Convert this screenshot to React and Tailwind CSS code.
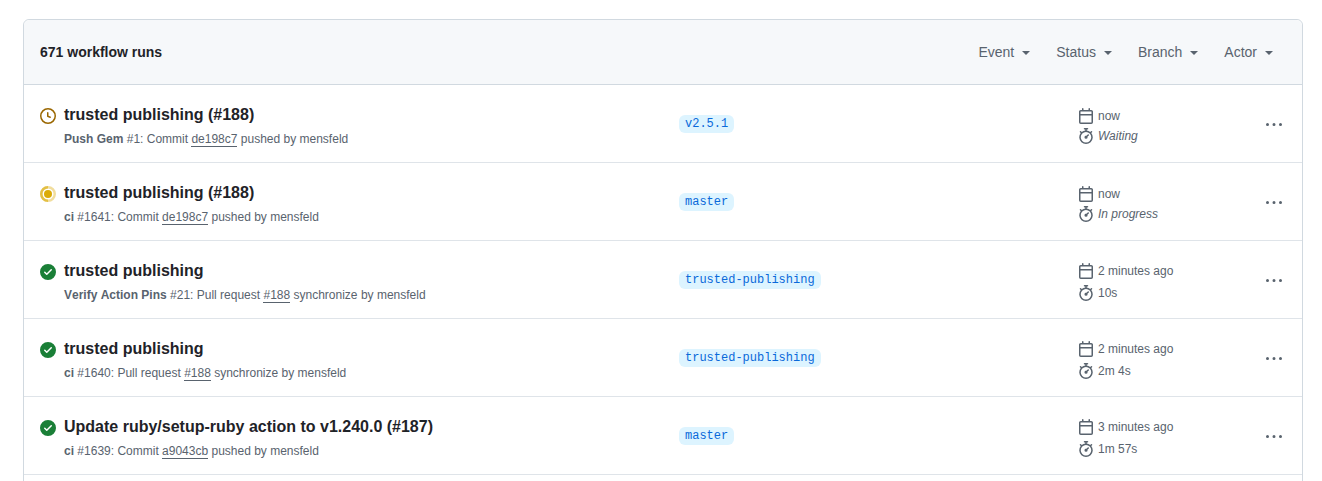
const sans = "font-['Liberation_Sans',Arial,sans-serif]";

function ClockIcon() {
  return (
    <svg width="16" height="16" viewBox="0 0 16 16" fill="#9a6700">
      <path d="M8 0a8 8 0 1 1 0 16A8 8 0 0 1 8 0ZM1.5 8a6.5 6.5 0 1 0 13 0 6.5 6.5 0 0 0-13 0Zm7-3.25v2.992l2.028.812a.75.75 0 0 1-.557 1.392l-2.5-1A.751.751 0 0 1 7 8.25v-3.5a.75.75 0 0 1 1.5 0Z" />
    </svg>
  );
}

function ProgressIcon() {
  return (
    <svg width="16" height="16" viewBox="0 0 16 16">
      <circle cx="8" cy="8" r="6.75" fill="none" stroke="#dbab09" strokeWidth="2.5" opacity="0.4" />
      <path d="M8 14.75A6.75 6.75 0 0 1 8 1.25" fill="none" stroke="#dbab09" strokeWidth="2.5" opacity="0.6" />
      <circle cx="8" cy="8" r="4" fill="#dbab09" />
    </svg>
  );
}

function CheckIcon() {
  return (
    <svg width="16" height="16" viewBox="0 0 16 16" fill="#1a7f37">
      <path d="M8 16A8 8 0 1 1 8 0a8 8 0 0 1 0 16Zm3.78-9.72a.751.751 0 0 0-.018-1.042.751.751 0 0 0-1.042-.018L6.75 9.19 5.28 7.72a.751.751 0 0 0-1.042.018.751.751 0 0 0-.018 1.042l2 2a.75.75 0 0 0 1.06 0Z" />
    </svg>
  );
}

function CalendarIcon() {
  return (
    <svg width="16" height="16" viewBox="0 0 16 16" fill="#59636e" className="shrink-0">
      <path d="M4.75 0a.75.75 0 0 1 .75.75V2h5V.75a.75.75 0 0 1 1.5 0V2h1.25c.966 0 1.75.784 1.75 1.75v10.5A1.75 1.75 0 0 1 13.25 16H2.75A1.75 1.75 0 0 1 1 14.25V3.75C1 2.784 1.784 2 2.75 2H4V.75A.75.75 0 0 1 4.75 0ZM2.5 7.5v6.75c0 .138.112.25.25.25h10.5a.25.25 0 0 0 .25-.25V7.5Zm10.75-4H2.75a.25.25 0 0 0-.25.25V6h11V3.75a.25.25 0 0 0-.25-.25Z" />
    </svg>
  );
}

function StopwatchIcon() {
  return (
    <svg width="16" height="16" viewBox="0 0 16 16" fill="#59636e" className="shrink-0">
      <path d="M5.75.75A.75.75 0 0 1 6.5 0h3a.75.75 0 0 1 0 1.5h-.75v1l-.001.041a6.724 6.724 0 0 1 3.464 1.435l.007-.006.75-.75a.751.751 0 0 1 1.042.018.751.751 0 0 1 .018 1.042l-.75.75-.006.007a6.75 6.75 0 1 1-10.548 0L2.72 5.03l-.75-.75a.751.751 0 0 1 .018-1.042.751.751 0 0 1 1.042-.018l.75.75.007.006A6.72 6.72 0 0 1 7.25 2.541V1.5H6.5a.75.75 0 0 1-.75-.75ZM8 14.5a5.25 5.25 0 1 0-.001-10.501A5.25 5.25 0 0 0 8 14.5Zm.389-6.7 1.33-1.33a.75.75 0 1 1 1.061 1.06L9.45 8.861A1.503 1.503 0 0 1 8 10.75a1.499 1.499 0 1 1 .389-2.95Z" />
    </svg>
  );
}

function KebabIcon() {
  return (
    <svg width="16" height="16" viewBox="0 0 16 16" fill="#59636e">
      <path d="M8 9a1.5 1.5 0 1 0 0-3 1.5 1.5 0 0 0 0 3ZM1.5 9a1.5 1.5 0 1 0 0-3 1.5 1.5 0 0 0 0 3Zm13 0a1.5 1.5 0 1 0 0-3 1.5 1.5 0 0 0 0 3Z" />
    </svg>
  );
}

function Filter({ label }) {
  return (
    <span className="flex items-center text-sm text-[#59636e]">
      {label}
      <span className="ml-[8px] mt-px h-0 w-0 border-x-4 border-t-4 border-x-transparent border-t-[#59636e]" />
    </span>
  );
}

const runs = [
  { icon: <ClockIcon />, title: "trusted publishing (#188)", name: "Push Gem", num: "#1", kind: "Commit", ref: "de198c7", after: "pushed by mensfeld", branch: "v2.5.1", when: "now", took: "Waiting", pending: true },
  { icon: <ProgressIcon />, title: "trusted publishing (#188)", name: "ci", num: "#1641", kind: "Commit", ref: "de198c7", after: "pushed by mensfeld", branch: "master", when: "now", took: "In progress", pending: true },
  { icon: <CheckIcon />, title: "trusted publishing", name: "Verify Action Pins", num: "#21", kind: "Pull request", ref: "#188", after: "synchronize by mensfeld", branch: "trusted-publishing", when: "2 minutes ago", took: "10s" },
  { icon: <CheckIcon />, title: "trusted publishing", name: "ci", num: "#1640", kind: "Pull request", ref: "#188", after: "synchronize by mensfeld", branch: "trusted-publishing", when: "2 minutes ago", took: "2m 4s" },
  { icon: <CheckIcon />, title: "Update ruby/setup-ruby action to v1.240.0 (#187)", name: "ci", num: "#1639", kind: "Commit", ref: "a9043cb", after: "pushed by mensfeld", branch: "master", when: "3 minutes ago", took: "1m 57s" },
];

function RunRow({ run }) {
  return (
    <div className="flex h-[78px] border-b border-[#d1d9e0b3] pl-4">
      <div className="flex w-[639px] shrink-0 pt-[21px]">
        <div className="mr-2 w-4 shrink-0 pt-[2px]">{run.icon}</div>
        <div>
          <div className="text-base leading-[18px] font-bold text-[#1f2328]">{run.title}</div>
          <div className="mt-[6px] text-xs leading-[18px] text-[#59636e]">
            <span className="font-bold [font-kerning:none]">{run.name}</span> {run.num}: {run.kind}{" "}
            <span className="border-b border-[#59636e]">{run.ref}</span> {run.after}
          </div>
        </div>
      </div>
      <div className="w-[399px] shrink-0 pt-[25px]">
        <span className="inline-block rounded-md bg-[#ddf4ff] px-1.5 font-['Liberation_Mono',monospace] text-xs leading-[18px] text-[#0969da]">
          {run.branch}
        </span>
      </div>
      <div className={`flex-1 text-xs leading-[18px] text-[#59636e] ${run.pending ? "pt-[22px]" : "pt-[21px]"}`}>
        <div className="flex items-center gap-1">
          <CalendarIcon />
          <span>{run.when}</span>
        </div>
        <div className={`flex items-center gap-1 ${run.pending ? "mt-[2px]" : "mt-[4px]"}`}>
          <StopwatchIcon />
          <span className={run.pending ? "italic" : ""}>{run.took}</span>
        </div>
      </div>
      <div className="mr-5 pt-[32px]">
        <KebabIcon />
      </div>
    </div>
  );
}

export default function App() {
  return (
    <div className={`h-[481px] overflow-hidden bg-white pt-[19px] pr-[19px] pl-[23px] ${sans}`}>
      <div className="h-[600px] rounded-md border border-[#d1d9e0]">
        <div className="flex h-[65px] items-center justify-between rounded-t-md border-b border-[#d1d9e0] bg-[#f6f8fa] pr-[29px] pl-4">
          <div className="text-sm font-bold text-[#1f2328]">671 workflow runs</div>
          <div className="flex gap-[26px]">
            <Filter label="Event" />
            <Filter label="Status" />
            <Filter label="Branch" />
            <Filter label="Actor" />
          </div>
        </div>
        {runs.map((run, i) => (
          <RunRow key={i} run={run} />
        ))}
      </div>
    </div>
  );
}
